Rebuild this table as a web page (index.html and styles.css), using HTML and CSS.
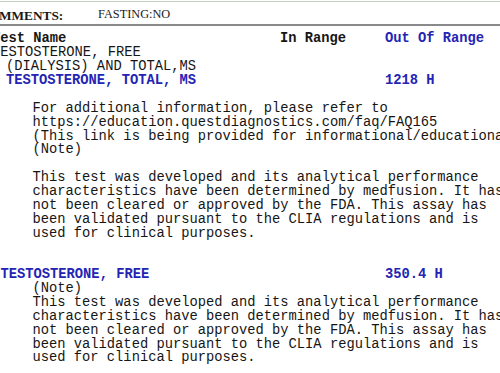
FILE: index.html
```html
<!DOCTYPE html>
<html>
<head>
<meta charset="utf-8">
<link rel="stylesheet" href="styles.css">
</head>
<body>
<div class="header">
  <span class="label">MMENTS:</span>
  <span class="value">FASTING:NO</span>
</div>
<div class="results">
  <div class="row head">
    <span class="c-name">Test Name</span>
    <span class="c-in">In Range</span>
    <span class="c-out blue">Out Of Range</span>
  </div>
  <div class="row"><span class="c-name">TESTOSTERONE, FREE</span></div>
  <div class="row"><span class="c-name sub">(DIALYSIS) AND TOTAL,MS</span></div>
  <div class="row test">
    <span class="c-name sub blue">TESTOSTERONE, TOTAL, MS</span>
    <span class="c-in"></span>
    <span class="c-out blue">1218 H</span>
  </div>
  <div class="note gap1">
    <div>For additional information, please refer to</div>
    <div>https://education.questdiagnostics.com/faq/FAQ165</div>
    <div>(This link is being provided for informational/educational purposes only.)</div>
    <div>(Note)</div>
  </div>
  <div class="note gap1">
    <div>This test was developed and its analytical performance</div>
    <div>characteristics have been determined by medfusion. It has</div>
    <div>not been cleared or approved by the FDA. This assay has</div>
    <div>been validated pursuant to the CLIA regulations and is</div>
    <div>used for clinical purposes.</div>
  </div>
  <div class="row test gap2">
    <span class="c-name sub2 blue">TESTOSTERONE, FREE</span>
    <span class="c-in"></span>
    <span class="c-out blue">350.4 H</span>
  </div>
  <div class="note">
    <div>(Note)</div>
    <div>This test was developed and its analytical performance</div>
    <div>characteristics have been determined by medfusion. It has</div>
    <div>not been cleared or approved by the FDA. This assay has</div>
    <div>been validated pursuant to the CLIA regulations and is</div>
    <div>used for clinical purposes.</div>
  </div>
</div>
</body>
</html>
```

FILE: styles.css
```css
html, body {
  margin: 0;
  padding: 0;
  background: #ffffff;
  overflow: hidden;
}

body {
  width: 500px;
  height: 373px;
}

.header {
  margin-top: 1px;
  height: 22px;
  border-top: 1px solid #c6cfbf;
  border-bottom: 2px solid #8a8a8a;
  display: flex;
  align-items: flex-start;
  font-family: "Liberation Serif", "Times New Roman", serif;
  color: #1a1a1a;
  white-space: nowrap;
}

.label {
  font-weight: bold;
  font-size: 13.3px;
  line-height: 14px;
  padding-top: 6.6px;
  width: 99px;
  margin-left: -1px;
}

.value {
  font-size: 12.3px;
  line-height: 14px;
  padding-top: 5.3px;
}

.results {
  margin-top: 6.4px;
  margin-left: -8px;
  font-family: "Liberation Mono", "Courier New", monospace;
  font-size: 13.77px;
  line-height: 13.87px;
  color: #161616;
  white-space: nowrap;
}

.row {
  display: grid;
  grid-template-columns: 288px 105px 1fr;
}

.head, .test {
  font-weight: bold;
}

.sub {
  padding-left: 14px;
}

.sub2 {
  padding-left: 8.5px;
}

.blue {
  color: #2424b4;
}

.note {
  padding-left: 40.5px;
}

.gap1 {
  margin-top: 13.87px;
}

.gap2 {
  margin-top: 27.74px;
}
```
